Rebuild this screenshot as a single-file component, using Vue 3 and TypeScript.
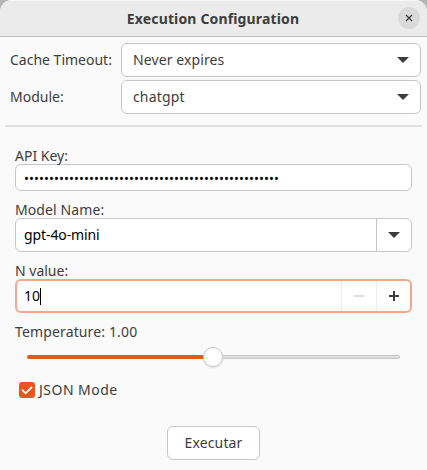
<script setup lang="ts">
import { ref } from 'vue'

const timeout = ref('Never expires')
const moduleName = ref('chatgpt')
const apiKey = '•'.repeat(51)
const model = ref('gpt-4o-mini')
const count = ref(10)
const temperature = ref(1)
const jsonMode = ref(true)
</script>

<template>
  <main class="window">
    <header class="titlebar">
      <h1>Execution Configuration</h1>
      <button class="close" aria-label="Close">
        <svg width="8" height="8" viewBox="0 0 8 8"><path d="M1 1l6 6M7 1L1 7" stroke="#3d3d3d" stroke-width="1.2" /></svg>
      </button>
    </header>

    <section class="top">
      <div class="row">
        <label>Cache Timeout:</label>
        <button class="box select">
          <span class="t-never">{{ timeout }}</span>
          <svg width="12" height="6" viewBox="0 0 12 6"><path d="M0 0h12L6 6z" fill="#3d3d3d" /></svg>
        </button>
      </div>
      <div class="row">
        <label>Module:</label>
        <button class="box select">
          <span class="t-chat">{{ moduleName }}</span>
          <svg width="12" height="6" viewBox="0 0 12 6"><path d="M0 0h12L6 6z" fill="#3d3d3d" /></svg>
        </button>
      </div>
    </section>

    <div class="separator"></div>

    <section class="form">
      <label class="caption">API Key:</label>
      <div class="box entry key"><span class="dots">{{ apiKey }}</span></div>

      <label class="caption model-caption">Model Name:</label>
      <div class="box entry combo">
        <span class="t-gpt">{{ model }}</span>
        <span class="cell drop">
          <svg width="12" height="6" viewBox="0 0 12 6"><path d="M0 0h12L6 6z" fill="#3d3d3d" /></svg>
        </span>
      </div>

      <label class="caption n-caption">N value:</label>
      <div class="box entry spin">
        <span>{{ count }}</span><i class="caret"></i>
        <span class="cell minus"><svg width="10" height="10" viewBox="0 0 10 10"><path d="M0 4h10v2H0z" fill="#dedede" /></svg></span>
        <span class="cell plus"><svg width="10" height="10" viewBox="0 0 10 10"><path d="M0 4h4V0h2v4h4v2H6v4H4V6H0z" fill="#3d3d3d" /></svg></span>
      </div>

      <label class="caption temp-caption">Temperature: {{ temperature.toFixed(2) }}</label>
      <div class="slider">
        <div class="filled"></div>
        <div class="knob"></div>
        <div class="rest"></div>
      </div>

      <div class="check">
        <span class="tick"><svg v-if="jsonMode" width="16" height="16" viewBox="0 0 16 16"><path d="M3 7.7l3.6 3.6L13 5" fill="none" stroke="#fff" stroke-width="1.8" /></svg></span>
        <span class="t-json">JSON Mode</span>
      </div>
    </section>

    <footer class="actions">
      <button class="box run">Executar</button>
    </footer>
  </main>
</template>

<style>
body {
  background: #b5b5b5;
}
</style>

<style scoped>
.window {
  box-sizing: border-box;
  width: 427px;
  height: 470px;
  overflow: hidden;
  border-radius: 12px 12px 0 0;
  background: #fafafa;
  color: #3d3d3d;
  font: 14px/20px 'Noto Sans', sans-serif;
  white-space: nowrap;
}
.window * {
  box-sizing: border-box;
}
button {
  font: inherit;
  color: inherit;
  padding: 0;
}
.titlebar {
  height: 37px;
  background: #ebebeb;
  border-bottom: 1px solid #bfbfbf;
  box-shadow: inset 0 1px #f7f7f7;
  display: grid;
  grid-template-columns: 1fr auto 1fr;
  align-items: center;
  padding-right: 7px;
  padding-left: 6px;
}
h1 {
  grid-column: 2;
  margin: 0;
  padding-top: 2px;
  font-size: 14px;
  line-height: 20px;
  font-weight: 700;
  letter-spacing: 0.15px;
}
.close {
  grid-column: 3;
  justify-self: end;
  width: 22px;
  height: 22px;
  border: 0;
  border-radius: 50%;
  background: #dadada;
  display: grid;
  place-items: center;
}
.top {
  padding: 6px 6px 0 10px;
  display: grid;
  gap: 3px;
}
.row {
  display: grid;
  grid-template-columns: 111px 300px;
  align-items: center;
}
.box {
  background: #fff;
  border: 1px solid #c6c6c6;
  border-radius: 6px;
}
.select {
  height: 34px;
  display: flex;
  align-items: center;
  justify-content: space-between;
  padding: 0 11px;
}
.t-never {
  letter-spacing: 0.1px;
}
.t-chat {
  letter-spacing: 0.15px;
}
.separator {
  height: 2px;
  margin: 11px 5px 0;
  background: #e1e1e1;
}
.form {
  padding: 19px 15px 0;
}
.caption {
  display: block;
  height: 18px;
  line-height: 20px;
}
.entry {
  display: flex;
  align-items: center;
  color: #000;
  padding-left: 8px;
}
.key {
  height: 27px;
}
.dots {
  font-size: 13px;
  letter-spacing: 0.11px;
}
.model-caption {
  margin-top: 9px;
  letter-spacing: 0.1px;
}
.combo,
.spin {
  height: 34px;
}
.t-gpt {
  letter-spacing: -0.1px;
}
.cell {
  align-self: stretch;
  display: grid;
  place-items: center;
}
.drop {
  width: 35px;
  margin-left: auto;
  border-left: 1px solid #c6c6c6;
}
.n-caption {
  margin-top: 9px;
}
.spin {
  border: 2px solid #f4a78d;
  padding-left: 7px;
}
.caret {
  width: 1px;
  height: 17px;
  background: #000;
}
.minus {
  width: 35px;
  margin-left: auto;
  border-left: 1px solid #ededed;
}
.plus {
  width: 34px;
  border-left: 1px solid #ededed;
}
.temp-caption {
  margin-top: 9px;
  letter-spacing: 0.14px;
}
.slider {
  height: 20px;
  margin: 7px 12px 0;
  display: flex;
  align-items: center;
}
.filled {
  width: 176px;
  height: 4px;
  border-radius: 2px 0 0 2px;
  background: #e95420;
}
.knob {
  width: 20px;
  height: 20px;
  border-radius: 50%;
  border: 1px solid #c6c6c6;
  background: #fff;
  box-shadow: 0 1px 2px rgba(0, 0, 0, 0.12);
}
.rest {
  flex: 1;
  height: 4px;
  border: 1px solid #c6c6c6;
  border-left: 0;
  border-radius: 0 2px 2px 0;
  background: #dedede;
}
.check {
  display: flex;
  align-items: center;
  gap: 4px;
  height: 20px;
  margin: 13px 0 0 4px;
}
.tick {
  width: 16px;
  height: 16px;
  border-radius: 3px;
  background: #e95420;
  display: flex;
}
.t-json {
  letter-spacing: 0.48px;
}
.actions {
  display: flex;
  justify-content: center;
  padding-top: 26px;
}
.run {
  width: 93px;
  height: 34px;
  letter-spacing: 0.15px;
}
</style>
